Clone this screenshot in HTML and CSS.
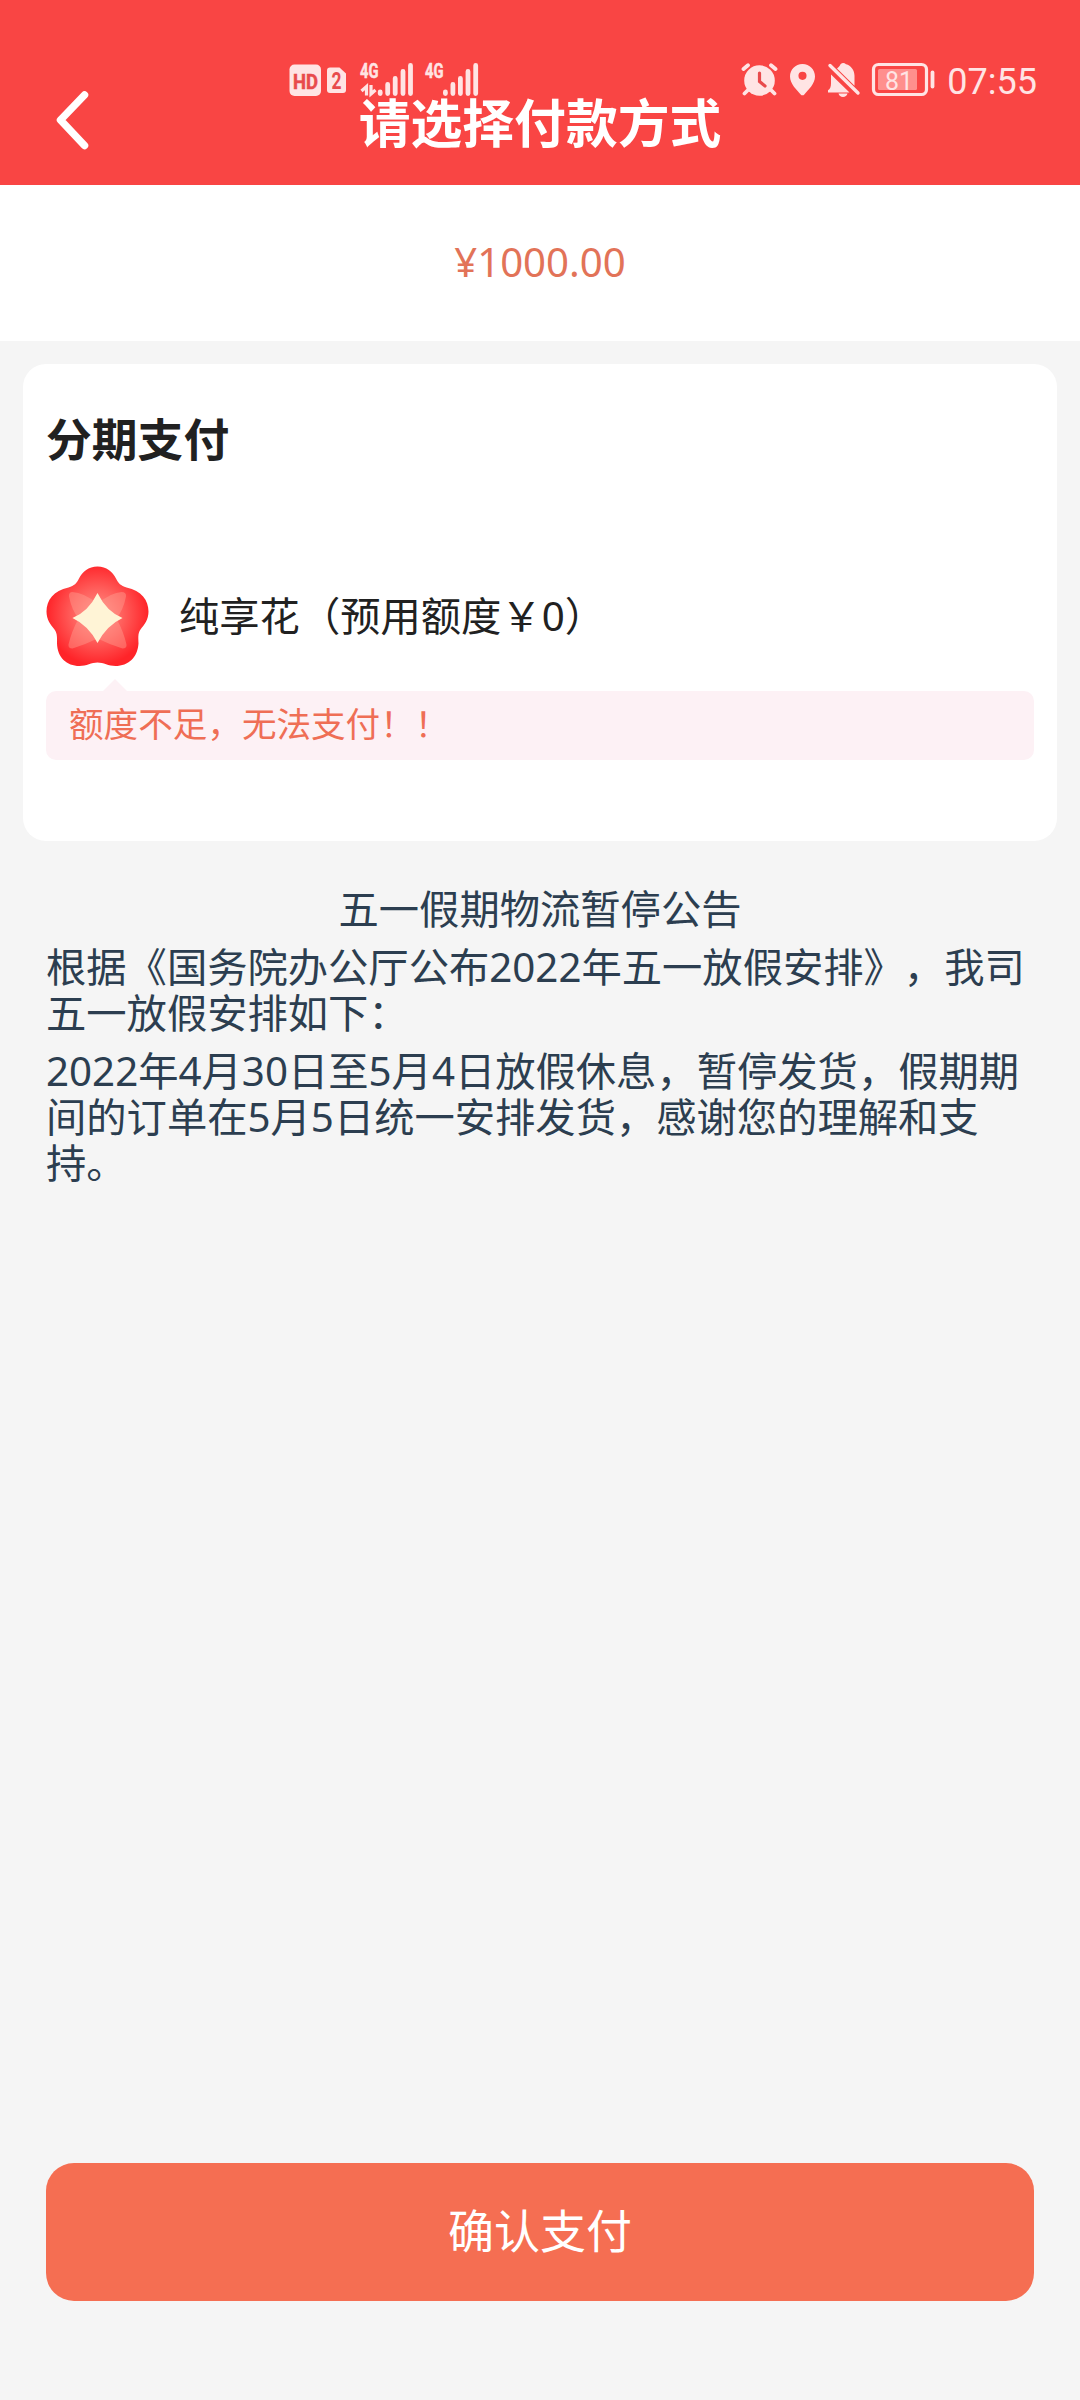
FILE: index.html
```html
<!DOCTYPE html>
<html lang="zh-CN">
<head>
<meta charset="utf-8">
<title>请选择付款方式</title>
<link rel="stylesheet" href="styles.css">
</head>
<body>
<div class="page">
  <header class="header">
    <div class="status">
      <svg width="194" height="40" viewBox="288 60 194 40">
        <rect x="289.500" y="64.500" width="31.500" height="31.500" rx="5" class="fill"/>
        <text x="293" y="88.500" class="hd" textLength="25" lengthAdjust="spacingAndGlyphs">HD</text>
        <path d="M330 67.500h9.500l6.500 6v16.500a3 3 0 0 1-3 3h-13a3 3 0 0 1-3-3v-19.500a3 3 0 0 1 3-3z" class="fill"/>
        <text x="331.500" y="89" class="sim" textLength="10" lengthAdjust="spacingAndGlyphs">2</text>
        <text x="360" y="77.500" class="net" textLength="18.500" lengthAdjust="spacingAndGlyphs">4G</text>
        <path d="M366.500 95.500v-9l-5 4.500M371 85v9l4.500-4" class="arrows"/>
        <path d="M380.200 92v1.500M387.700 84.500v9M395.200 78.500v15M403 71.500v22M410.500 65.500v28" class="bars"/>
        <text x="425" y="77.500" class="net" textLength="18.500" lengthAdjust="spacingAndGlyphs">4G</text>
        <path d="M445.400 92v1.500M452.900 84.500v9M460.400 78.500v15M468 71.500v22M475.700 65.500v28" class="bars"/>
      </svg>
      <svg class="status-right" width="196" height="40" viewBox="741 60 196 40">
        <path d="M747.500 90.500l-3 3M771.500 90.500l3 3M743.500 69l4.500-3.800M775.500 69l-4.500-3.800" class="line"/>
        <circle cx="759.500" cy="80.500" r="15.300" class="fill"/>
        <path d="M759.500 73v8.500l5.500 4.500" class="cut"/>
        <path fill-rule="evenodd" d="M802.500 64c-7.200 0-12.500 5.600-12.500 12.500 0 7.500 7 13.500 10.700 18a2.300 2.300 0 0 0 3.600 0c3.700-4.500 10.700-10.500 10.700-18 0-6.900-5.300-12.500-12.500-12.500zm0 7.800a4 4 0 1 1 0 8.100 4 4 0 0 1 0-8.100z" class="fill"/>
        <path d="M831 74.500l18.500 18h-21.500v-2.200c2-1 3-3.500 3-7zM837 68.500c1.700-1.200 2.800-2.600 3.500-4.200a4 4 0 0 1 5.500 0c5 1.200 8.500 6 8.500 11.500v10zM838.500 93.500h9c-.5 2-2.300 3.500-4.500 3.500s-4-1.500-4.500-3.500z" class="fill"/>
        <path d="M830 65.500l28 27.500" class="slash"/>
        <rect x="873.500" y="64.500" width="53" height="30" rx="5" class="battery"/>
        <rect x="878" y="69" width="39" height="21" rx="1.500" class="charge"/>
        <path d="M932.500 72.500v14" class="line"/>
        <text x="885" y="89.500" class="level" textLength="28" lengthAdjust="spacingAndGlyphs">81</text>
      </svg>
      <span class="time">07:55</span>
    </div>
    <svg class="back" width="36" height="62" viewBox="0 0 36 62"><path d="M29.500 6L5.500 31l24 25.500"/></svg>
    <h1 class="title">请选择付款方式</h1>
  </header>
  <section class="amount">¥1000.00</section>
  <main class="content">
    <section class="card">
      <h2 class="card-title">分期支付</h2>
      <div class="option">
        <svg width="103" height="101" viewBox="46.500 565.500 103 101">
          <defs>
            <radialGradient id="petal" gradientUnits="userSpaceOnUse" cx="98" cy="614" r="51">
              <stop offset="0" stop-color="#ff9188"/><stop offset=".5" stop-color="#ff5f5c"/><stop offset="1" stop-color="#ff2429"/>
            </radialGradient>
          </defs>
          <path fill="url(#petal)" d="M98 566C107 566 113 571 116.500 578C119 583 121 585 127 587C142 590 149 600 149 611C149 619 145 624 141 629C138 633 139 638 139 643C138 657 129 665.500 116 665.500C109 665.500 104 662 98 662C92 662 87 665.500 80 665.500C67 665.500 58 657 57.500 643C57.500 638 58 633 55 629C51 624 47 619 47 611C47 600 54 590 69 587C75 585 77 583 79.500 578C83 571 89 566 98 566Z"/>
          <path class="petals" d="M73 591.500Q84 592 98 603Q112 592 122 591.500Q127 591.500 126.500 596Q124 609 117 618Q124 631 127 644Q127.500 648 123 648Q110 644 98 638Q86 644 73 648Q68.500 648 69 644Q72 631 79 618Q72 609 69.500 596Q69 591.500 73 591.500Z"/>
          <path class="star" d="M98 592.500Q107 611 123 617.500Q107 625 98 642.500Q89 625 73 617.500Q89 611 98 592.500Z"/>
        </svg>
        <span class="option-name">纯享花（预用额度￥0）</span>
      </div>
      <p class="warning">额度不足，无法支付！！</p>
    </section>
    <article class="notice">
      <p class="notice-title">五一假期物流暂停公告</p>
      <p>根据《国务院办公厅公布2022年五一放假安排》，我司<br>五一放假安排如下：</p>
      <p>2022年4月30日至5月4日放假休息，暂停发货，假期期<br>间的订单在5月5日统一安排发货，感谢您的理解和支<br>持。</p>
    </article>
  </main>
  <footer class="footer"><button class="confirm" type="button">确认支付</button></footer>
</div>
</body>
</html>
```
FILE: styles.css
```css
* { box-sizing: border-box; }
body { margin: 0; background: #f5f5f5; font-family: "Noto Sans", "Noto Sans CJK SC", sans-serif; text-spacing-trim: space-all; }
h1, h2, p { margin: 0; }
svg { display: block; flex: none; }
.page { display: flex; flex-direction: column; height: 2400px; }

.header { position: relative; display: flex; align-items: center; justify-content: center; height: 185px; padding-top: 56px; background: #f94544; }
.title { color: #fff; font: 700 51.800px/62px "Noto Sans CJK SC", sans-serif; white-space: nowrap; }
.back { position: absolute; left: 55px; top: 89px; fill: none; stroke: #fff; stroke-width: 7.500; stroke-linecap: round; stroke-linejoin: round; }
.status { position: absolute; left: 288px; right: 43px; top: 60px; display: flex; height: 40px; }
.status-right { margin-left: auto; }
.time { width: 90px; margin-left: 10px; color: #ffe4e4; font: 400 36px/44px Roboto, sans-serif; white-space: nowrap; text-align: right; }
.fill { fill: #ffe4e4; }
.hd, .sim { fill: #e84a4c; font: 700 20px Roboto, sans-serif; }
.hd { stroke: #e84a4c; stroke-width: .5; }
.sim { font-size: 23px; }
.net { fill: #ffe4e4; stroke: #ffe4e4; stroke-width: .5; font: 700 19.500px Roboto, sans-serif; }
.level { fill: #ffe4e4; font: 400 26px Roboto, sans-serif; }
.bars { fill: none; stroke: #ffe4e4; stroke-width: 4.800; stroke-linecap: round; }
.arrows { fill: none; stroke: #ffe4e4; stroke-width: 3.200; }
.line, .slash { fill: none; stroke: #ffe4e4; stroke-width: 3.800; stroke-linecap: round; }
.slash { stroke-width: 3.400; }
.cut { fill: none; stroke: #e84a4c; stroke-width: 3.200; stroke-linecap: round; }
.battery { fill: none; stroke: #ffe4e4; stroke-width: 3.200; }
.charge { fill: #ff8f8d; }

.amount { height: 156px; background: #fff; color: #e27358; font-size: 40.200px; line-height: 154px; text-align: center; }

.content { flex: 1; padding: 23px; }
.card { height: 477px; padding: 43px 23px 0; background: #fff; border-radius: 23px; }
.card-title { color: #212121; font: 700 45.800px/60px "Noto Sans CJK SC", sans-serif; }
.option { display: flex; align-items: center; gap: 30px; height: 101px; margin-top: 99px; color: #212121; font-size: 40.300px; white-space: nowrap; }
.option-name { padding-bottom: 6px; }
.warning { position: relative; height: 69px; margin-top: 24px; padding-left: 23px; background: #fdf1f5; border-radius: 10px; color: #ef6e55; font-size: 34.600px; line-height: 66px; }
.warning::before { content: ""; position: absolute; left: 57px; top: -12px; border: solid transparent; border-width: 0 12px 12px; border-bottom-color: #fdf1f5; }
.petals { fill: #ffa899; fill-opacity: .4; }
.star { fill: #fff4d6; }

.notice { padding: 45px 23px 0; color: #2c3e50; font-size: 40.300px; line-height: 46px; white-space: nowrap; }
.notice p + p { margin-top: 12px; }
.notice-title { text-align: center; }

.footer { padding: 0 46px 99px; }
.confirm { display: block; width: 100%; height: 138px; padding: 0 0 8px; border: 0; border-radius: 28px; background: #f56e52; color: #fff; font: 400 46px/130px "Noto Sans CJK SC", sans-serif; }
```
